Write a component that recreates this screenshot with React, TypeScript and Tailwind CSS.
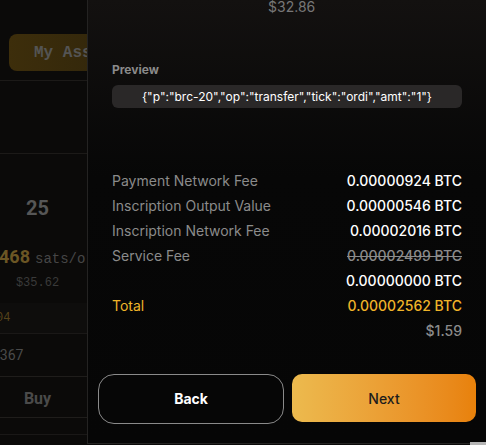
const fees = [
  { label: "Payment Network Fee", value: "0.00000924 BTC" },
  { label: "Inscription Output Value", value: "0.00000546 BTC" },
  { label: "Inscription Network Fee", value: "0.00002016 BTC" },
];

function BackgroundPage() {
  return (
    <div className="h-[445px] w-[486px] bg-[#0b0a09] font-['Liberation_Mono',monospace]">
      <div className="h-[34px]" />
      <div className="ml-[9px] flex h-[37px] w-[120px] items-center rounded-lg bg-gradient-to-r from-[#3d2e0b] to-[#30250b] pl-[25px] text-[16px] font-bold text-[#545454]">
        My Assets
      </div>
      <div className="mt-[9px] h-px w-[87px] bg-[#1c1a18]" />
      <div className="h-[72px]" />
      <div className="h-px w-[87px] bg-[#1c1a18]" />
      <div className="flex w-[75px] flex-col items-center">
        <div className="mt-[42px] font-['Roboto',sans-serif] text-[20px] font-bold leading-6 text-[#565656]">
          25
        </div>
      </div>
      <div className="mt-[25px] flex w-[87px] items-baseline overflow-hidden whitespace-nowrap">
        <span className="ml-[-1px] font-['Roboto',sans-serif] text-[18px] font-bold leading-6 text-[#6b5624]">
          468
        </span>
        <span className="ml-[5px] text-[14px] text-[#464646]">sats/ordi</span>
      </div>
      <div className="mt-[5px] w-[75px] text-center text-[12px] leading-4 text-[#3a3a3a]">
        $35.62
      </div>
      <div className="mt-[12px] flex h-[30px] w-[87px] items-center bg-[#0e0d0c] text-[12px] text-[#56431a]">
        <span className="ml-[-4px]">04</span>
      </div>
      <div className="h-px w-[87px] bg-[#1a1817]" />
      <div className="flex h-[42px] w-[87px] items-center font-['Roboto',sans-serif] text-[14px] text-[#4a4a4a]">
        <span className="ml-[-8px]">1367</span>
      </div>
      <div className="h-px w-[87px] bg-[#1f1d1b]" />
      <div className="flex h-[40px] w-[75px] items-center justify-center pt-[4px] font-['Roboto',sans-serif] text-[16px] font-bold text-[#4a4a4a]">
        Buy
      </div>
      <div className="h-px w-[87px] bg-[#1f1d1b]" />
      <div className="h-[16px]" />
      <div className="h-px w-[87px] bg-[#1a1817]" />
    </div>
  );
}

function FeeRow({ label, value, strike, tone }: { label: string; value: string; strike?: boolean; tone?: string }) {
  return (
    <div className="flex h-[25px] items-center justify-between text-[14px]">
      <span className={tone ?? "text-[#8b8b8b]"}>{label}</span>
      <span className={strike ? "font-medium text-[#8b8b8b] line-through" : `font-medium ${tone ?? "text-white"}`}>
        {value}
      </span>
    </div>
  );
}

export default function App() {
  return (
    <div className="relative h-[445px] w-[486px] overflow-hidden">
      <BackgroundPage />
      <div className="absolute left-[87px] top-0 flex h-[444px] w-[399px] flex-col border-b border-l border-[#242322] bg-gradient-to-b from-[#131110] via-[#070707] via-40% to-[#060606] font-['Inter',sans-serif]">
        <div className="mt-[-3px] pl-[180px] text-[14px] leading-5 text-[#777]">$32.86</div>
        <div className="px-6">
          <div className="mt-[45px] text-[12px] font-bold leading-4 text-[#8a8a8a]">Preview</div>
          <div className="mt-[7px] flex h-[23px] items-center justify-center rounded-md bg-[#2a2828] text-[12px] text-white">
            {'{"p":"brc-20","op":"transfer","tick":"ordi","amt":"1"}'}
          </div>
          <div className="mt-[60px] flex flex-col">
            {fees.map((f) => (
              <FeeRow key={f.label} label={f.label} value={f.value} />
            ))}
            <FeeRow label="Service Fee" value="0.00002499 BTC" strike />
            <FeeRow label="" value="0.00000000 BTC" />
            <FeeRow label="Total" value="0.00002562 BTC" tone="text-[#f0b429]" />
            <div className="flex h-[25px] items-center justify-end text-[14px] font-medium text-[#8b8b8b]">$1.59</div>
          </div>
        </div>
        <div className="mt-[31px] flex items-start gap-2 px-[10px]">
          <button className="flex h-[50px] w-[186px] items-center justify-center rounded-2xl border border-[#8a8a8a] bg-[#060606] pb-[2px] text-[14px] font-bold text-white">
            Back
          </button>
          <button className="flex h-[48px] flex-1 items-center justify-center rounded-[10px] bg-gradient-to-r from-[#ecba4e] to-[#e8810a] text-[14px] font-medium text-[#1c1c1c]">
            Next
          </button>
        </div>
      </div>
      <div className="absolute right-0 top-[442px] h-[3px] w-[16px] bg-[#b5b5b5]" />
    </div>
  );
}
